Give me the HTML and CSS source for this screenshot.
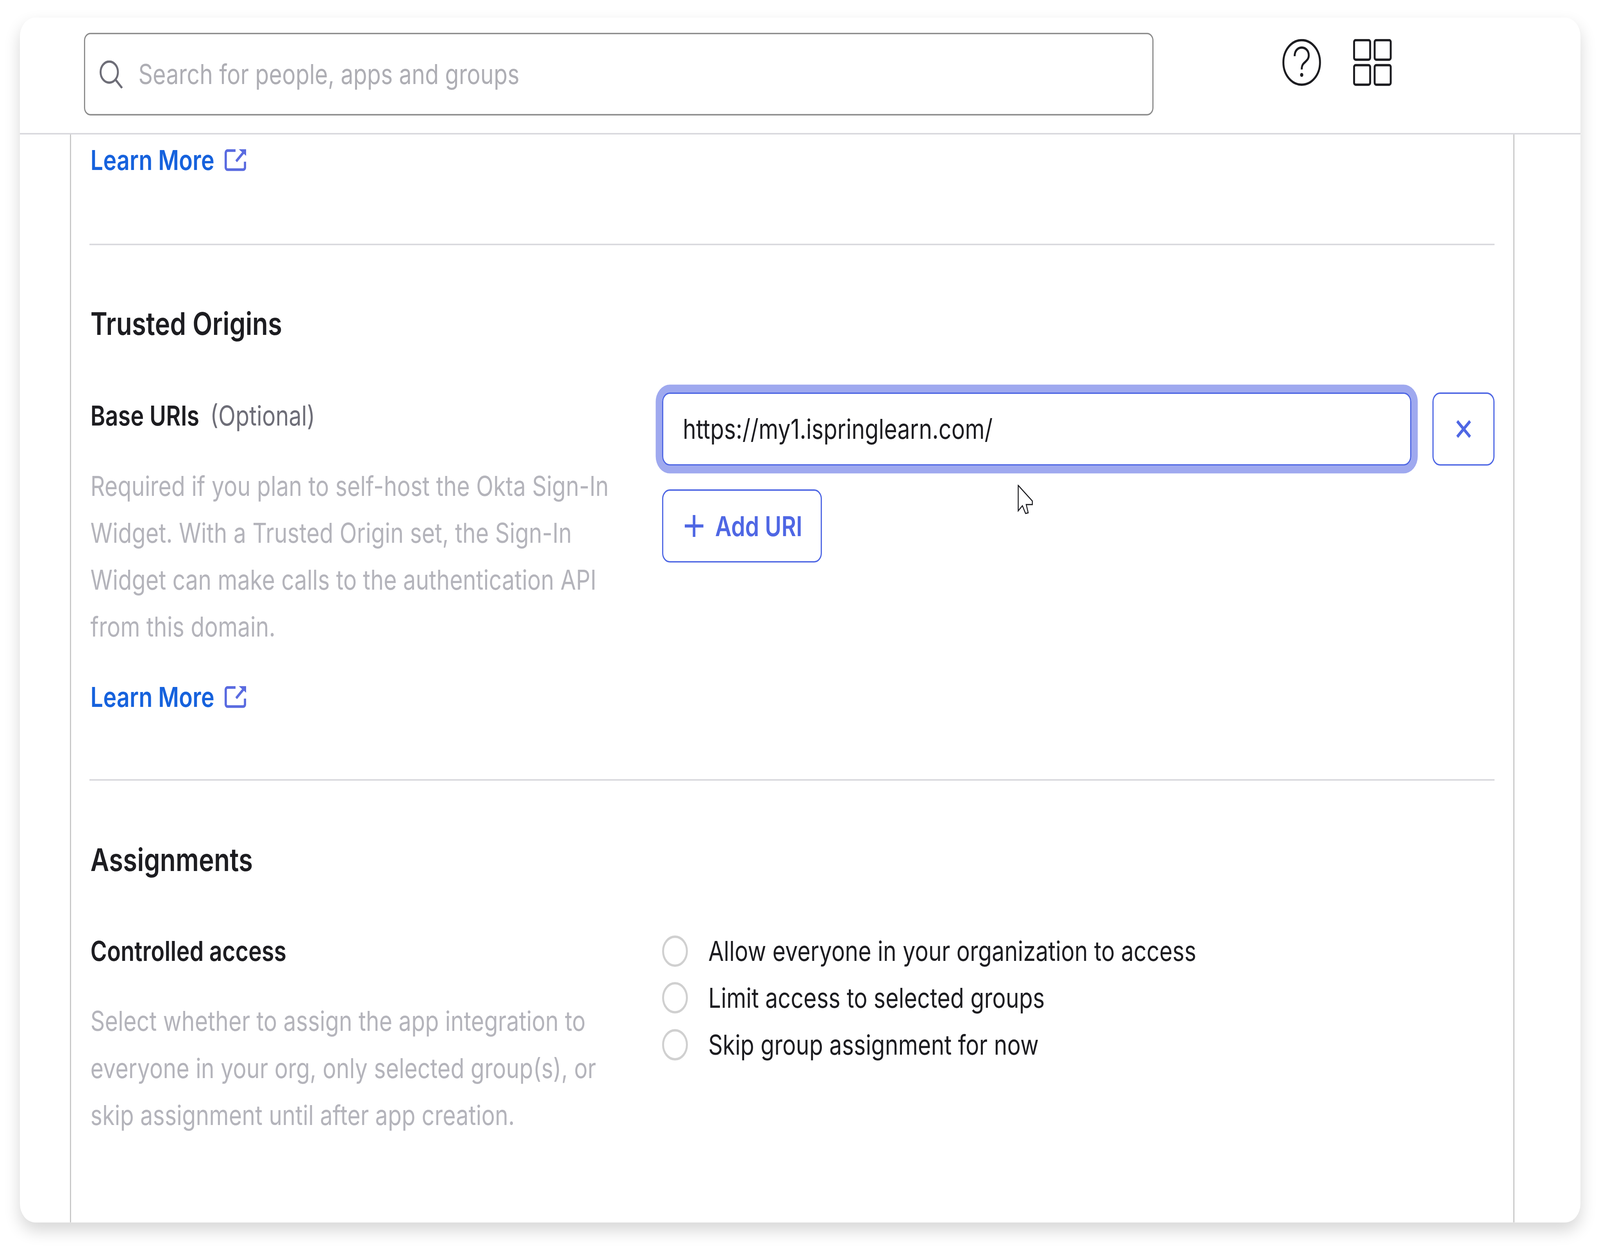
FILE: index.html
```html
<!DOCTYPE html>
<html lang="en">
<head>
<meta charset="utf-8">
<title>Okta app integration</title>
<link rel="stylesheet" href="styles.css">
</head>
<body>
<div class="stage">
<div class="card">
  <header class="topbar">
    <div class="search">
      <svg class="search-icon" viewBox="0 0 72 72"><circle cx="30" cy="30" r="27" /><path d="M50 50 L70 71" /></svg>
      <span class="placeholder">Search for people, apps and groups</span>
    </div>
    <div class="top-icons">
      <svg class="top-icon" viewBox="0 0 120 120"><circle cx="60" cy="60" r="57" /><path d="M38 44 C38 30 48 22 60 22 C72 22 82 30 82 42 C82 52 74 56 67 62 C62 66 60 70 60 78" /><circle class="dot" cx="60" cy="92" r="5" /></svg>
      <svg class="top-icon" viewBox="0 0 120 120"><rect x="3" y="3" width="50" height="50" rx="5" /><rect x="67" y="3" width="50" height="50" rx="5" /><rect x="3" y="67" width="50" height="50" rx="5" /><rect x="67" y="67" width="50" height="50" rx="5" /></svg>
    </div>
  </header>
  <main class="content">
    <a class="learn first">Learn More
      <svg class="ext" viewBox="0 0 67 56"><path d="M34 3.500 H10 A6 6 0 0 0 3.500 10 V46 A6 6 0 0 0 10 52.500 H57 A6 6 0 0 0 63.500 46 V32" /><path d="M36 31 L60 7" /><path class="head" d="M44 0 H67 V17 Z" /></svg>
    </a>
    <hr class="rule rule-top">
    <section class="section">
      <h2 class="heading">Trusted Origins</h2>
      <div class="row">
        <div class="left">
          <div class="label">Base URIs <span class="optional">(Optional)</span></div>
          <p class="desc">Required if you plan to self-host the Okta Sign-In Widget. With a Trusted Origin set, the Sign-In Widget can make calls to the authentication API from this domain.</p>
          <a class="learn">Learn More
            <svg class="ext" viewBox="0 0 67 56"><path d="M34 3.500 H10 A6 6 0 0 0 3.500 10 V46 A6 6 0 0 0 10 52.500 H57 A6 6 0 0 0 63.500 46 V32" /><path d="M36 31 L60 7" /><path class="head" d="M44 0 H67 V17 Z" /></svg>
          </a>
        </div>
        <div class="right">
          <div class="uri-row">
            <div class="input">https://my1.ispringlearn.com/</div>
            <div class="btn-x"><svg class="x-icon" viewBox="0 0 46 46"><path d="M3 3 L43 43 M43 3 L3 43" /></svg></div>
          </div>
          <div class="btn-add"><svg class="plus" viewBox="0 0 58 56"><path d="M29 0 V56 M0 28 H58" /></svg>Add URI</div>
        </div>
      </div>
    </section>
    <hr class="rule rule-mid">
    <section class="section assign">
      <h2 class="heading">Assignments</h2>
      <div class="row">
        <div class="left">
          <div class="label">Controlled access</div>
          <p class="desc">Select whether to assign the app integration to everyone in your org, only selected group(s), or skip assignment until after app creation.</p>
        </div>
        <div class="right radios">
          <label class="radio"><span class="dot-radio"></span>Allow everyone in your organization to access</label>
          <label class="radio"><span class="dot-radio"></span>Limit access to selected groups</label>
          <label class="radio"><span class="dot-radio"></span>Skip group assignment for now</label>
        </div>
      </div>
    </section>
    <svg class="cursor" viewBox="0 0 48 76"><path d="M2 2 V67 L15 54 L25 74 L33 72 L27 51 H46 V42 Z" /></svg>
  </main>
</div>
</div>
</body>
</html>
```
FILE: styles.css
```css
* { box-sizing: border-box; }
html, body { margin: 0; padding: 0; background: #fff; }
body { height: 3204px; overflow: hidden; }
.stage {
  width: 4980px;
  height: 3204px;
  padding: 45px 61px 0 62px;
  background: #fff;
  font-family: Inter, "Liberation Sans", sans-serif;
  font-size: 70px;
  line-height: 120px;
  color: #1d1d21;
}
@media (max-width: 4979px) {
  .stage { zoom: .82245; transform: scaleY(1.21588); transform-origin: 0 0; }
}
.card {
  height: 3083px;
  background: #fff;
  border-radius: 48px;
  box-shadow: 0 20px 46px rgba(0, 0, 0, .16);
  display: flex;
  flex-direction: column;
  overflow: hidden;
}
.topbar {
  height: 299px;
  flex: none;
  padding: 39px 0 0 199px;
  border-bottom: 4px solid #d7d7dc;
  display: flex;
  align-items: flex-start;
}
.search {
  flex: none;
  width: 3329px;
  height: 212px;
  border: 4px solid #8c8c8c;
  border-radius: 20px;
  display: flex;
  align-items: center;
  padding-left: 46px;
  gap: 48px;
}
.search-icon { width: 72px; height: 72px; fill: none; stroke: #6e6e78; stroke-width: 6; }
.placeholder { color: #aeaeb4; }
.top-icons { display: flex; gap: 100px; margin: 16px 0 0 402px; }
.top-icon { width: 120px; height: 120px; fill: none; stroke: #1d1d21; stroke-width: 6; }
.top-icon .dot { fill: #1d1d21; stroke: none; }

.content {
  position: relative;
  flex: 1;
  margin: 0 205px 0 156px;
  padding: 6px 58px 0 57px;
  border-left: 4px solid #c8c8c8;
  border-right: 4px solid #c8c8c8;
}
.learn {
  display: flex;
  align-items: center;
  gap: 32px;
  color: #1662dd;
  font-weight: 600;
  margin-top: 60px;
  width: max-content;
}
.learn.first { margin-top: 0; margin-left: 3px; }
.ext { width: 67px; height: 56px; fill: none; stroke: #5a6be0; stroke-width: 7; }
.ext .head { fill: #5a6be0; stroke: none; }
.rule { height: 4px; border: 0; margin: 0; background: #d7d7dc; }
.rule-top { margin-top: 154px; }
.rule-mid { margin-top: 150px; }
.heading { margin: 141px 0 115px 3px; font-size: 80px; line-height: 120px; font-weight: 600; }
.assign .heading { margin: 142px 0 114px 3px; }
.row { display: grid; grid-template-columns: 1650px 1fr; column-gap: 132px; }
.left { padding-left: 3px; }
.label { font-weight: 600; }
.optional { font-weight: 400; color: #6e6e78; margin-left: 16px; }
.desc { margin: 60px 0 0; color: #b4b4bb; }
.uri-row { display: flex; gap: 65px; }
.input {
  flex: 1;
  height: 188px;
  border: 4px solid #4f67e4;
  border-radius: 24px;
  box-shadow: 0 0 0 20px #9fa9ef;
  padding-left: 61px;
  display: flex;
  align-items: center;
}
.btn-x, .btn-add {
  height: 188px;
  border: 4px solid #4f67e4;
  border-radius: 24px;
  display: flex;
  align-items: center;
  justify-content: center;
}
.btn-x { width: 194px; flex: none; }
.x-icon { width: 46px; height: 46px; fill: none; stroke: #4f67e4; stroke-width: 8; }
.btn-add {
  width: 498px;
  margin-top: 60px;
  padding-left: 10px;
  color: #4f67e4;
  font-weight: 600;
  gap: 36px;
}
.plus { width: 58px; height: 56px; fill: none; stroke: #4f67e4; stroke-width: 8; }
.radios { display: flex; flex-direction: column; }
.radio { display: flex; align-items: center; gap: 64px; height: 120px; }
.dot-radio { width: 80px; height: 80px; border-radius: 50%; border: 7px solid #d0d0d0; flex: none; }
.cursor {
  position: absolute;
  left: 2946px;
  top: 896px;
  width: 48px;
  height: 76px;
  fill: #fff;
  stroke: #1d1d21;
  stroke-width: 3;
}
```
